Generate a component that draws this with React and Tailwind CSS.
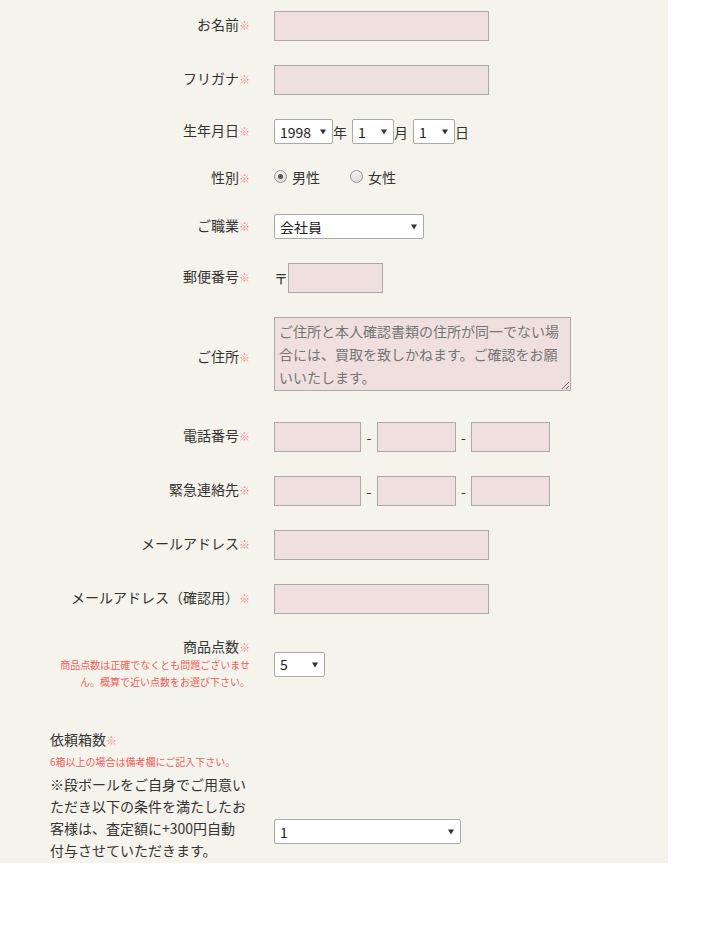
import React from "react";

const inputCls =
  "h-[30px] border border-[#a9a9a9] bg-[#efdfdf] outline-none block";

function Req() {
  return <span className="text-[11px] text-[#ff8a8a]">※</span>;
}

function Label({ children }) {
  return (
    <div className="w-[250px] shrink-0 text-right text-[14px] leading-[20px] pb-[3px] text-[#333]">
      {children}
      <Req />
    </div>
  );
}

function Row({ label, children, inner = "" }) {
  return (
    <div className="flex items-center">
      <Label>{label}</Label>
      <div className={`pl-[24px] flex items-center ${inner}`}>{children}</div>
    </div>
  );
}

function Select({ value, options, className }) {
  return (
    <span className={`relative block h-[25px] ${className}`}>
      <select
        defaultValue={value}
        className="block w-full h-full appearance-none bg-white border border-[#a9a9a9] rounded-[2px] pl-[5px] text-[14px] text-[#222] leading-none outline-none"
      >
        {options.map((o) => (
          <option key={o}>{o}</option>
        ))}
      </select>
      <svg
        className="pointer-events-none absolute right-[7px] top-[10px]"
        width="6"
        height="6"
        viewBox="0 0 6 6"
      >
        <path d="M0 0.5H6L3 5.5Z" fill="#333" />
      </svg>
    </span>
  );
}

function Radio({ checked, label }) {
  return (
    <span className="flex items-center">
      <span className="w-[13px] h-[13px] rounded-full border border-[#949494] bg-gradient-to-b from-[#f2f2f2] to-[#dcdcdc] flex items-center justify-center">
        {checked && <span className="w-[5px] h-[5px] rounded-full bg-[#555]" />}
      </span>
      <span className="ml-[5px] text-[14px] leading-[18px] text-[#333]">{label}</span>
    </span>
  );
}

const Dash = ({ w }) => (
  <span className={`${w} text-center text-[14px] text-[#333]`}>-</span>
);

export default function App() {
  const years = Array.from({ length: 80 }, (_, i) => String(1940 + i));
  const nums12 = Array.from({ length: 12 }, (_, i) => String(i + 1));
  const nums31 = Array.from({ length: 31 }, (_, i) => String(i + 1));
  return (
    <div className="bg-white min-h-[927px] font-['Noto_Sans_CJK_JP','Noto_Sans',sans-serif]">
      <div className="w-[668px] bg-[#f5f4ec] pt-[11px] pb-[2px] flex flex-col gap-[24px]">
        <Row label="お名前">
          <input className={`${inputCls} w-[215px]`} />
        </Row>
        <Row label="フリガナ">
          <input className={`${inputCls} w-[215px]`} />
        </Row>
        <Row label="生年月日">
          <Select value="1998" options={years} className="w-[59px]" />
          <span className="text-[14px] text-[#333] leading-[20px]">年</span>
          <Select value="1" options={nums12} className="w-[42px] ml-[5px]" />
          <span className="text-[14px] text-[#333] leading-[20px]">月</span>
          <Select value="1" options={nums31} className="w-[42px] ml-[5px]" />
          <span className="text-[14px] text-[#333] leading-[20px]">日</span>
        </Row>
        <div className="flex items-center h-[22px]">
          <Label>性別</Label>
          <div className="pl-[24px] flex items-center pb-[5px]">
            <Radio checked label="男性" />
            <span className="ml-[30px]">
              <Radio label="女性" />
            </span>
          </div>
        </div>
        <Row label="ご職業">
          <Select
            value="会社員"
            options={["会社員", "自営業", "公務員", "学生", "その他"]}
            className="w-[150px]"
          />
        </Row>
        <Row label="郵便番号">
          <span className="w-[14px] text-[14px] text-[#333] leading-[20px]">〒</span>
          <input className={`${inputCls} w-[95px]`} />
        </Row>
        <Row label="ご住所">
          <div className="pb-[7px]">
            <textarea
              className="block w-[297px] h-[74px] border border-[#a9a9a9] bg-[#efdfdf] outline-none pt-[2px] px-[4px] text-[14px] leading-[23px] text-[#333] placeholder:text-[#757575]"
              placeholder="ご住所と本人確認書類の住所が同一でない場合には、買取を致しかねます。ご確認をお願いいたします。"
            />
          </div>
        </Row>
        <Row label="電話番号">
          <input className={`${inputCls} w-[87px]`} />
          <Dash w="w-[16px]" />
          <input className={`${inputCls} w-[79px]`} />
          <Dash w="w-[15px]" />
          <input className={`${inputCls} w-[79px]`} />
        </Row>
        <Row label="緊急連絡先">
          <input className={`${inputCls} w-[87px]`} />
          <Dash w="w-[16px]" />
          <input className={`${inputCls} w-[79px]`} />
          <Dash w="w-[15px]" />
          <input className={`${inputCls} w-[79px]`} />
        </Row>
        <Row label="メールアドレス">
          <input className={`${inputCls} w-[215px]`} />
        </Row>
        <Row label="メールアドレス（確認用）">
          <input className={`${inputCls} w-[215px]`} />
        </Row>
        <div className="flex items-center">
          <div className="w-[250px] shrink-0 text-right">
            <div className="text-[14px] leading-[16px] pb-[1px] text-[#333]">
              商品点数
              <Req />
            </div>
            <div className="text-[10px] leading-[17px] text-[#f55a5a] whitespace-nowrap">
              商品点数は正確でなくとも問題ございませ
              <br />
              ん。概算で近い点数をお選び下さい。
            </div>
          </div>
          <div className="pl-[24px]">
            <Select
              value="5"
              options={["1", "2", "3", "4", "5", "6", "7", "8", "9", "10"]}
              className="w-[51px]"
            />
          </div>
        </div>
        <div className="flex mt-[15px]">
          <div className="w-[250px] shrink-0 pl-[50px]">
            <div className="text-[14px] leading-[20px] text-[#333]">
              依頼箱数
              <Req />
            </div>
            <div className="mt-[4px] text-[10px] leading-[16px] text-[#f55a5a] whitespace-nowrap">
              6箱以上の場合は備考欄にご記入下さい。
            </div>
            <div className="mt-[3px] text-[14px] leading-[22px] text-[#333] whitespace-nowrap">
              ※段ボールをご自身でご用意い
              <br />
              ただき以下の条件を満たしたお
              <br />
              客様は、査定額に+300円自動
              <br />
              付与させていただきます。
            </div>
          </div>
          <div className="pl-[24px] pt-[90px]">
            <Select
              value="1"
              options={["1", "2", "3", "4", "5"]}
              className="w-[187px]"
            />
          </div>
        </div>
      </div>
    </div>
  );
}
